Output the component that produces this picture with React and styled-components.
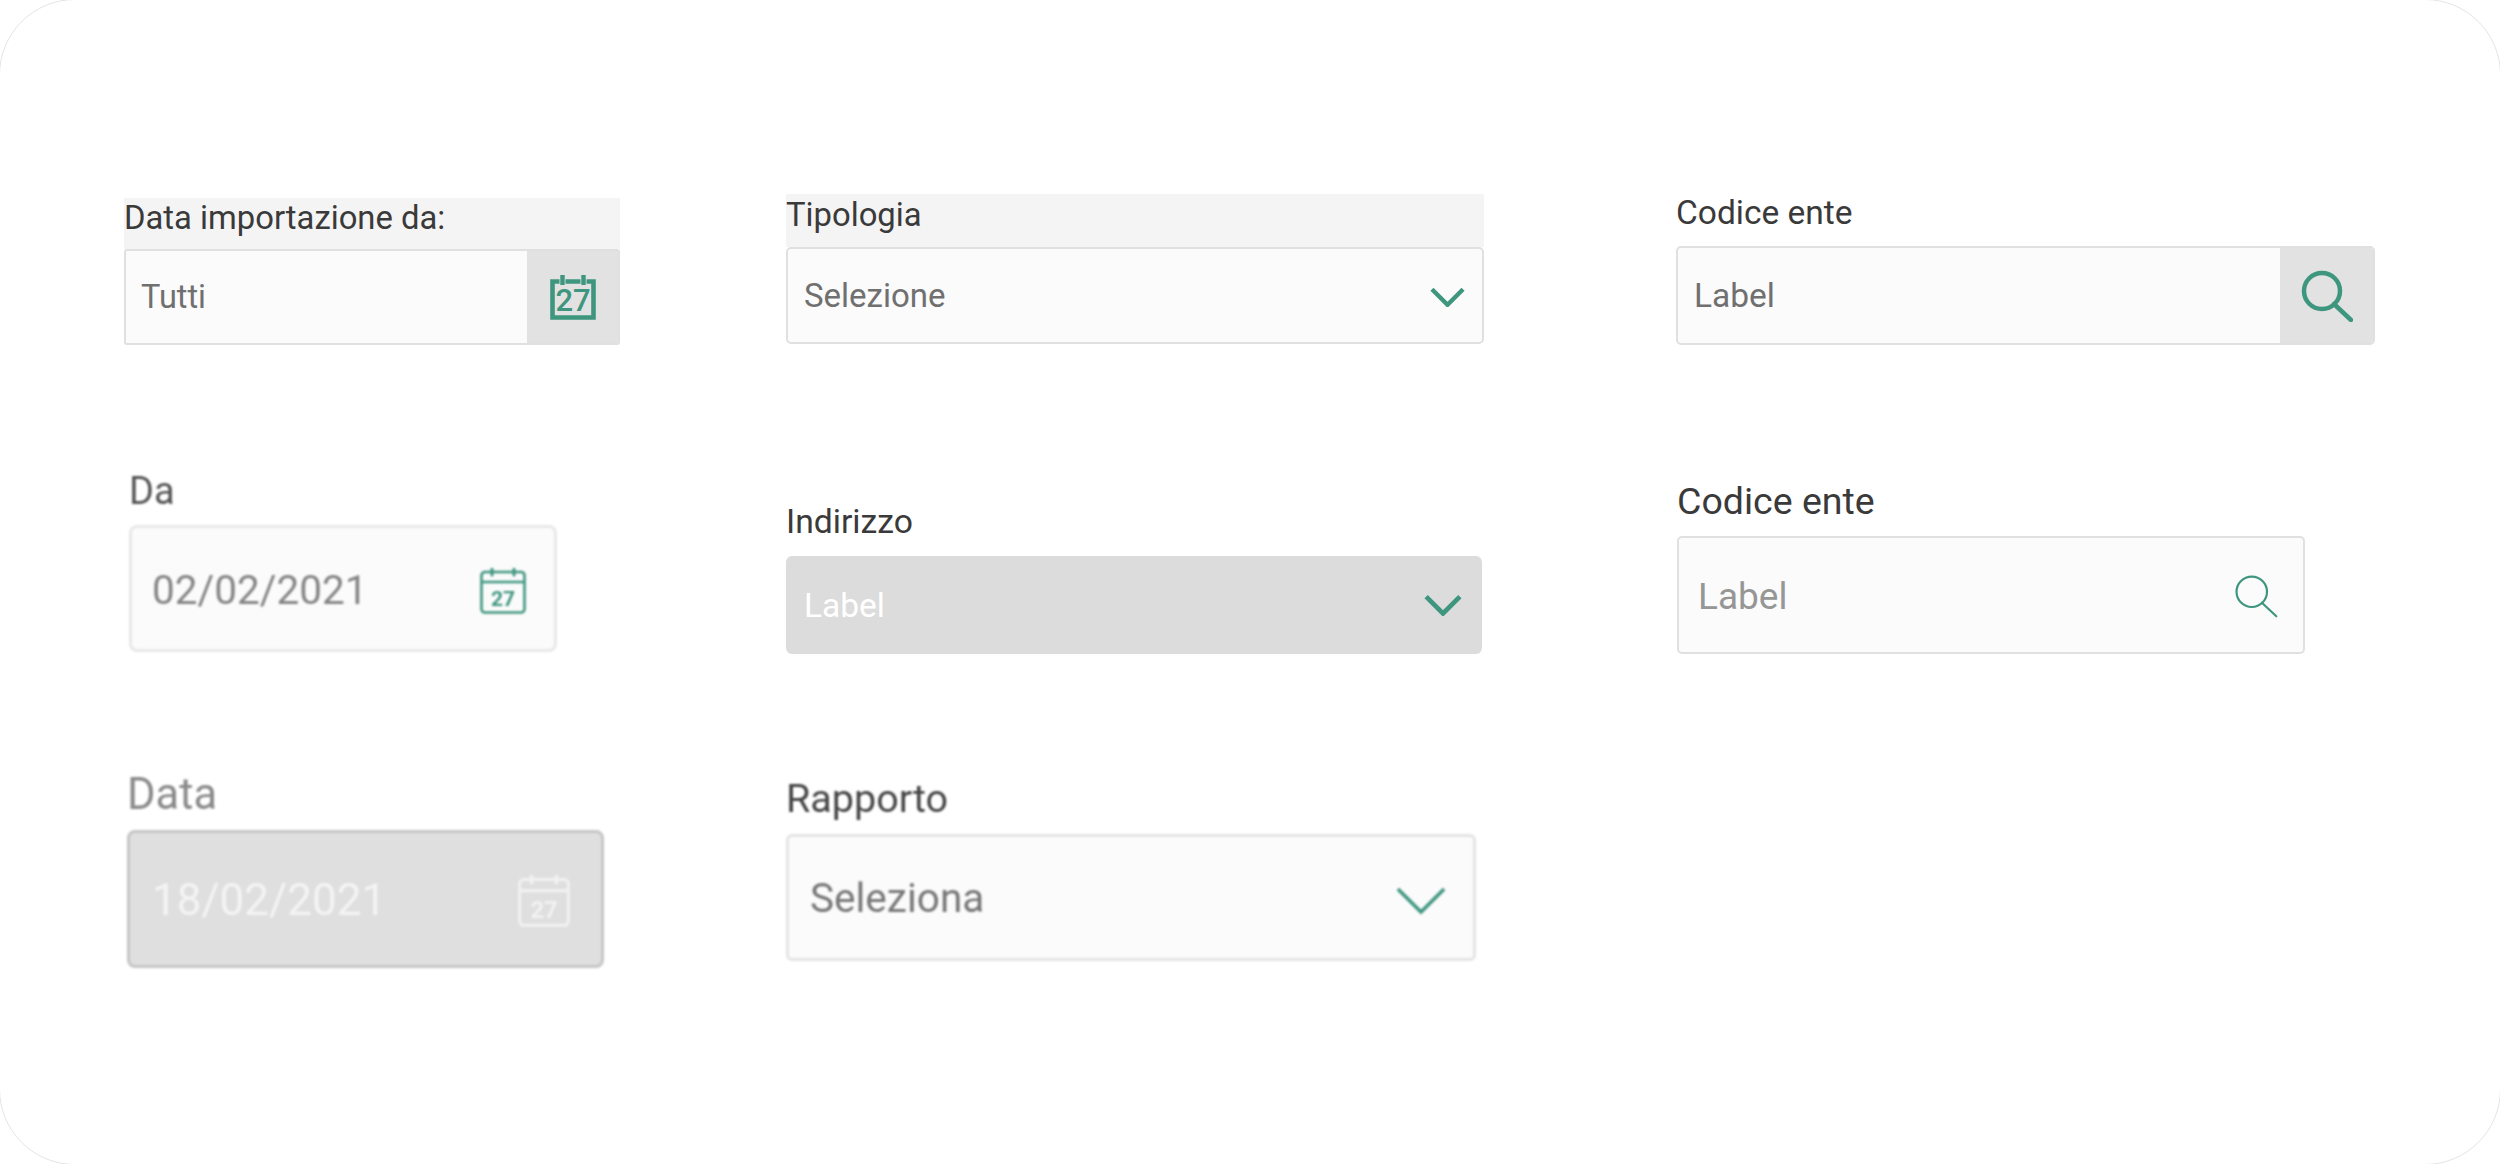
import React from "react";
import styled, { createGlobalStyle } from "styled-components";

const GREEN = "#3f967f";

const Global = createGlobalStyle`
  html, body {
    margin: 0;
    background: #fff;
    overflow: hidden;
    font-family: Roboto, "Liberation Sans", sans-serif;
  }
  * { box-sizing: border-box; }
`;

// the straight edges of the frame fall just outside the window, only the corners show
const Page = styled.div`
  height: 1166px;
  margin: -1px;
  border: 1px solid #e4e4e4;
  border-radius: 76px;
  padding: 193px 0 0 124px;
  display: grid;
  grid-template-columns: 662px 890px 1fr;
  align-items: start;
`;

const Column = styled.div`
  display: flex;
  flex-direction: column;
  padding-top: ${(p) => p.$top || 0}px;
`;

const Field = styled.div`
  width: ${(p) => p.$width}px;
  margin-top: ${(p) => p.$mt || 0}px;
  margin-left: ${(p) => p.$ml || 0}px;
  ${(p) => (p.$soft ? "filter: blur(0.8px);" : "")}
`;

const Label = styled.div`
  height: ${(p) => p.$h}px;
  line-height: ${(p) => p.$lh}px;
  font-size: ${(p) => p.$size}px;
  color: ${(p) => p.$color || "#3a3a3a"};
  background: ${(p) => (p.$strip ? "#f4f4f4" : "transparent")};
  white-space: nowrap;
`;

const Box = styled.div`
  height: ${(p) => p.$h}px;
  display: flex;
  align-items: stretch;
  background: ${(p) => p.$bg || "#fbfbfb"};
  border: ${(p) => (p.$border === undefined ? "2px solid #e0e0e0" : p.$border)};
  border-radius: ${(p) => p.$radius || 5}px;
  overflow: hidden;
`;

const Value = styled.div`
  flex: 1;
  display: flex;
  align-items: center;
  padding-left: ${(p) => p.$pad}px;
  padding-top: ${(p) => p.$low || 0}px;
  font-size: ${(p) => p.$size}px;
  color: ${(p) => p.$color || "#707070"};
`;

const IconSlot = styled.div`
  display: flex;
  align-items: center;
  justify-content: center;
  flex: none;
  width: ${(p) => p.$width}px;
  padding-top: ${(p) => p.$low || 0}px;
  background: ${(p) => p.$bg || "transparent"};
`;

const BoldCalendar = () => (
  <svg width="46" height="45" viewBox="0 0 46 45">
    <path
      d="M9.5 6.5H2.5V42.5H43.5V6.5H36.5M15.5 6.5H30.5"
      fill="none"
      stroke={GREEN}
      strokeWidth="4.6"
    />
    <path d="M12.5 0V10M33.5 0V10" stroke={GREEN} strokeWidth="4.4" />
    <text
      x="23"
      y="36"
      textAnchor="middle"
      fontSize="31"
      fontWeight="500"
      fontFamily="Roboto, sans-serif"
      fill={GREEN}
    >
      27
    </text>
  </svg>
);

const ThinCalendar = ({ size, color }) => (
  <svg width={size} height={size} viewBox="0 0 46 46">
    <rect x="1.5" y="4" width="43" height="40.5" rx="3.5" fill="none" stroke={color} strokeWidth="2.6" />
    <path d="M1.5 14H44.5" stroke={color} strokeWidth="2.6" />
    <path d="M12 1V7M34 1V7" stroke={color} strokeWidth="3" strokeLinecap="round" />
    <text
      x="23"
      y="38"
      textAnchor="middle"
      fontSize="21"
      fontWeight="700"
      fontFamily="Roboto, sans-serif"
      fill={color}
    >
      27
    </text>
  </svg>
);

const Chevron = ({ width, height, stroke }) => (
  <svg width={width} height={height} viewBox="0 0 36 20">
    <path d="M2 2L18 18L34 2" fill="none" stroke={GREEN} strokeWidth={stroke} />
  </svg>
);

const Magnifier = ({ size, stroke }) => (
  <svg width={size} height={size} viewBox="0 0 52 52">
    <circle cx="21" cy="21" r="18" fill="none" stroke={GREEN} strokeWidth={stroke} />
    <path d="M33 34L50 50" stroke={GREEN} strokeWidth={stroke} strokeLinecap="round" />
  </svg>
);

export default function App() {
  return (
    <>
      <Global />
      <Page>
        <Column $top={5}>
          <Field $width={496}>
            <Label $strip $h={51} $lh={40} $size={32.8}>Data importazione da:</Label>
            <Box $h={96} $radius={3}>
              <Value $pad={15} $size={32.5}>Tutti</Value>
              <IconSlot $width={91} $bg="#e2e2e2"><BoldCalendar /></IconSlot>
            </Box>
          </Field>
          <Field $width={428} $mt={120} $ml={5} $soft>
            <Label $h={60} $lh={52} $size={38} $color="#555">Da</Label>
            <Box $h={127} $radius={8} $border="3px solid #e8e8e8">
              <Value $pad={20} $size={40.5} $color="#858585" $low={3}>02/02/2021</Value>
              <IconSlot $width={102} $low={4}><ThinCalendar size={46} color={GREEN} /></IconSlot>
            </Box>
          </Field>
          <Field $width={477} $mt={117} $ml={3} $soft>
            <Label $h={61} $lh={52} $size={43.5} $color="#8a8a8a">Data</Label>
            <Box $h={138} $radius={8} $bg="#dfdfdf" $border="3px solid #c6c6c6">
              <Value $pad={22} $size={44} $color="#f4f4f4" $low={2}>18/02/2021</Value>
              <IconSlot $width={114} $low={4}><ThinCalendar size={52} color="#f2f2f2" /></IconSlot>
            </Box>
          </Field>
        </Column>

        <Column $top={1}>
          <Field $width={698}>
            <Label $strip $h={53} $lh={42} $size={32.8}>Tipologia</Label>
            <Box $h={97}>
              <Value $pad={16} $size={33}>Selezione</Value>
              <IconSlot $width={70} $low={3}><Chevron width={35} height={20} stroke={4.5} /></IconSlot>
            </Box>
          </Field>
          <Field $width={696} $mt={159}>
            <Label $h={53} $lh={38} $size={33.7}>Indirizzo</Label>
            <Box $h={98} $bg="#dcdcdc" $border="none" $radius={6}>
              <Value $pad={18} $size={33.5} $color="#fff">Label</Value>
              <IconSlot $width={79}><Chevron width={38} height={22} stroke={4.5} /></IconSlot>
            </Box>
          </Field>
          <Field $width={690} $mt={122} $soft>
            <Label $h={58} $lh={46} $size={39.5} $color="#444">Rapporto</Label>
            <Box $h={127} $border="3px solid #e4e4e4" $radius={6}>
              <Value $pad={21} $size={40.5} $color="#777">Seleziona</Value>
              <IconSlot $width={105} $low={5}><Chevron width={52} height={29} stroke={2.4} /></IconSlot>
            </Box>
          </Field>
        </Column>

        <Column $top={0}>
          <Field $width={699}>
            <Label $h={53} $lh={40} $size={33.5}>Codice ente</Label>
            <Box $h={99}>
              <Value $pad={16} $size={33.5}>Label</Value>
              <IconSlot $width={93} $bg="#e2e2e2"><Magnifier size={52} stroke={4.5} /></IconSlot>
            </Box>
          </Field>
          <Field $width={628} $mt={133} $ml={1}>
            <Label $h={58} $lh={46} $size={37.5}>Codice ente</Label>
            <Box $h={118}>
              <Value $pad={19} $size={37} $color="#969696" $low={2}>Label</Value>
              <IconSlot $width={94} $low={2}><Magnifier size={44} stroke={2.6} /></IconSlot>
            </Box>
          </Field>
        </Column>
      </Page>
    </>
  );
}
